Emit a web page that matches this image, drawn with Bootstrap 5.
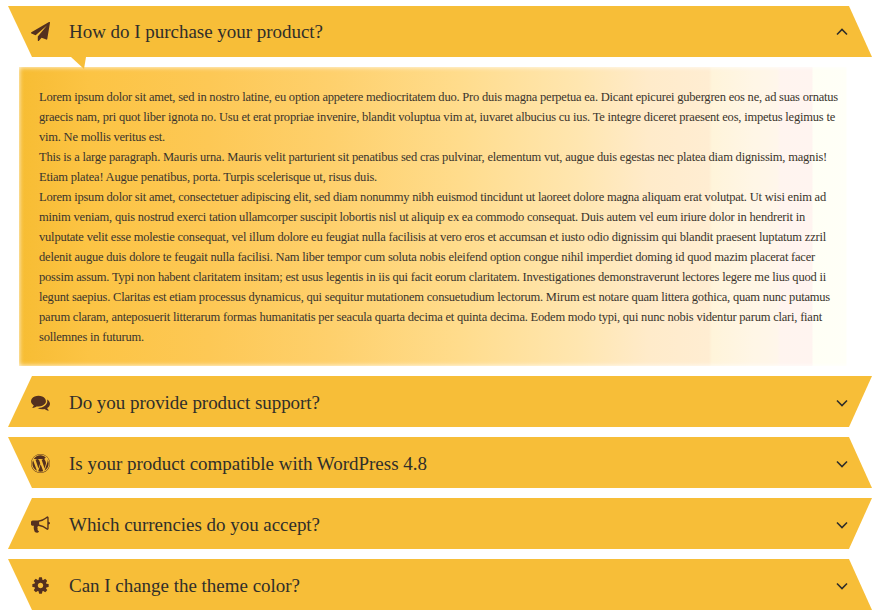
<!DOCTYPE html>
<html lang="en">
<head>
<meta charset="utf-8">
<meta name="viewport" content="width=device-width, initial-scale=1">
<title>FAQ</title>
<link href="https://cdn.jsdelivr.net/npm/bootstrap@5.3.0/dist/css/bootstrap.min.css" rel="stylesheet">
<style>
body{font-family:"Liberation Serif","Times New Roman",serif;background:#fff;overflow:hidden}
.faq{padding:6px 8px 5px;gap:10px}
.faq-head{height:51px;padding:0 24px 0 23px;background:#f7be38;color:#302e2a;font-size:19px;line-height:1;text-align:left;clip-path:polygon(0 0,841px 0,100% 100%,24px 100%)}
.faq-item:nth-child(even) .faq-head{clip-path:polygon(24px 0,100% 0,841px 100%,0 100%)}
.faq-item + .faq-item .faq-head{padding-top:1px}
.faq-icon{width:19px;height:19px;fill:#54301f;margin-right:19px;flex:none}
.faq-caret{width:12px;height:8px;fill:none;stroke:#302e2a;stroke-width:1.6;margin-top:1px}
.faq-item{position:relative}
.faq-tail{position:absolute;left:63px;top:51px;width:15px;height:12px;fill:#f7be38;z-index:2}
.faq-panel{margin:10px 12px 0 11px;height:299px;padding:20px 0 0 20px;color:#3a342c;font-size:12.5px;line-height:20px;
background:linear-gradient(90deg,#f7bd33 0,#f9bf3a 28px,#fcc444 70px,#fdc855 190px,#fed06c 310px,#ffdc8c 440px,#ffe6b0 560px,#ffebca 630px,#ffedd2 690px,#fff4da 693px,#fff6e6 735px,#fff6ea 758px,#fff4ef 761px,#fff4f0 793px,#fffff5 794px,#fffff7 827px,#fff 828px);box-shadow:inset 0 0 5px #fff}
.faq-panel p{margin:0;white-space:nowrap}
.fit{display:block;width:max-content;white-space:nowrap}
</style>
<script src="https://cdn.jsdelivr.net/npm/bootstrap@5.3.0/dist/js/bootstrap.bundle.min.js"></script>
</head>
<body>
<main class="faq d-flex flex-column" id="faq">
<section class="faq-item">
<button class="faq-head w-100 border-0 d-flex align-items-center" type="button" data-bs-toggle="collapse" data-bs-target="#answer">
<svg class="faq-icon" viewBox="0 0 1792 1792"><path d="M1764 11q33 24 27 64l-256 1536q-5 29-32 45-14 8-31 8-11 0-24-5l-453-185-242 295q-18 23-49 23-13 0-22-4-19-7-30.500-23.500t-11.500-36.500v-349l864-1059-1069 925-395-162q-37-14-40-55-2-40 32-59l1664-960q15-9 32-9 20 0 36 11z"/></svg>
<span class="fit" data-w="254">How do I purchase your product?</span>
<svg class="faq-caret ms-auto" viewBox="0 0 12 8"><path d="M1 6.500L6 1.500L11 6.500"/></svg>
</button>
<svg class="faq-tail" viewBox="0 0 15 12"><path d="M0 0H15L13 12Z"/></svg>
<div class="collapse show" id="answer"><div class="faq-panel">
<p><span class="fit" data-w="799">Lorem ipsum dolor sit amet, sed in nostro latine, eu option appetere mediocritatem duo. Pro duis magna perpetua ea. Dicant epicurei gubergren eos ne, ad suas ornatus</span>
<span class="fit" data-w="796">graecis nam, pri quot liber ignota no. Usu et erat propriae invenire, blandit voluptua vim at, iuvaret albucius cu ius. Te integre diceret praesent eos, impetus legimus te</span>
<span class="fit" data-w="126">vim. Ne mollis veritus est.</span></p>
<p><span class="fit" data-w="788">This is a large paragraph. Mauris urna. Mauris velit parturient sit penatibus sed cras pulvinar, elementum vut, augue duis egestas nec platea diam dignissim, magnis!</span>
<span class="fit" data-w="338">Etiam platea! Augue penatibus, porta. Turpis scelerisque ut, risus duis.</span></p>
<p><span class="fit" data-w="787">Lorem ipsum dolor sit amet, consectetuer adipiscing elit, sed diam nonummy nibh euismod tincidunt ut laoreet dolore magna aliquam erat volutpat. Ut wisi enim ad</span>
<span class="fit" data-w="766">minim veniam, quis nostrud exerci tation ullamcorper suscipit lobortis nisl ut aliquip ex ea commodo consequat. Duis autem vel eum iriure dolor in hendrerit in</span>
<span class="fit" data-w="787">vulputate velit esse molestie consequat, vel illum dolore eu feugiat nulla facilisis at vero eros et accumsan et iusto odio dignissim qui blandit praesent luptatum zzril</span>
<span class="fit" data-w="776">delenit augue duis dolore te feugait nulla facilisi. Nam liber tempor cum soluta nobis eleifend option congue nihil imperdiet doming id quod mazim placerat facer</span>
<span class="fit" data-w="787">possim assum. Typi non habent claritatem insitam; est usus legentis in iis qui facit eorum claritatem. Investigationes demonstraverunt lectores legere me lius quod ii</span>
<span class="fit" data-w="791">legunt saepius. Claritas est etiam processus dynamicus, qui sequitur mutationem consuetudium lectorum. Mirum est notare quam littera gothica, quam nunc putamus</span>
<span class="fit" data-w="783">parum claram, anteposuerit litterarum formas humanitatis per seacula quarta decima et quinta decima. Eodem modo typi, qui nunc nobis videntur parum clari, fiant</span>
<span class="fit" data-w="105">sollemnes in futurum.</span></p>
</div></div>
</section>
<section class="faq-item">
<button class="faq-head w-100 border-0 d-flex align-items-center" type="button">
<svg class="faq-icon" viewBox="0 0 1792 1792"><path d="M1408 768q0 139-94 257t-256.500 186.500-353.500 68.500q-86 0-176-16-124 88-278 128-36 9-86 16h-3q-11 0-20.500-8t-11.500-21q-1-3-1-6.500t.5-6.500 2-6l2.500-5 3.500-5.500 4-5 4.500-5 4-4.500q5-6 23-25t26-29.500 22.500-29 25-38.500 20.500-44q-124-72-195-177t-71-224q0-139 94-257t256.500-186.500 353.500-68.500 353.500 68.500 256.500 186.500 94 257zm384 256q0 120-71 224.500t-195 176.500q10 24 20.500 44t25 38.500 22.500 29 26 29.500 23 25q1 1 4 4.500t4.500 5 4 5 3.500 5.500l2.500 5 2 6 .5 6.500-1 6.500q-3 14-13 22t-22 7q-50-7-86-16-154-40-278-128-90 16-176 16-271 0-472-132 58 4 88 4 161 0 309-45t264-129q125-92 192-212t67-254q0-77-23-152 129 71 204 178t75 230z"/></svg>
<span class="fit" data-w="251">Do you provide product support?</span>
<svg class="faq-caret ms-auto" viewBox="0 0 12 8"><path d="M1 1.500L6 6.500L11 1.500"/></svg>
</button>
</section>
<section class="faq-item">
<button class="faq-head w-100 border-0 d-flex align-items-center" type="button">
<svg class="faq-icon" viewBox="0 0 1792 1792"><path d="M127 896q0-163 67-313l367 1005q-196-95-315-281t-119-411zm1288-39q0 19-2.500 38.500t-10 49.500-11.500 44-17.500 59-17.500 58l-76 256-278-826q46-3 88-8 19-2 26-18.500t-2.500-31-28.500-13.500l-205 10q-75-1-202-10-12-1-20.500 5t-11.500 15-1.500 18.500 9 16.500 19.500 8l80 8 120 328-168 504-280-832q46-3 88-8 19-2 26-18.500t-2.500-31-28.500-13.500l-205 10q-7 0-23-.5t-26-.5q105-160 274.500-253.500t367.500-93.500q147 0 280.500 53t238.500 149h-10q-55 0-92 40.500t-37 95.500q0 12 2 24t4 21.500 8 23 9 21 12 22.500 12.500 21 14.500 24 14 23q63 107 63 212zm-506 106l237 647q1 6 5 11-126 44-255 44-112 0-217-32zm661-436q95 174 95 369 0 209-104 385.500t-279 278.500l235-678q59-169 59-276 0-42-6-79zm-674-527q182 0 348 71t286 191 191 286 71 348-71 348-191 286-286 191-348 71-348-71-286-191-191-286-71-348 71-348 191-286 286-191 348-71zm0 1751q173 0 331.500-68t273-182.500 182.500-273 68-331.500-68-331.500-182.500-273-273-182.500-331.500-68-331.500 68-273 182.500-182.500 273-68 331.500 68 331.500 182.500 273 273 182.500 331.500 68z"/></svg>
<span class="fit" data-w="358">Is your product compatible with WordPress 4.8</span>
<svg class="faq-caret ms-auto" viewBox="0 0 12 8"><path d="M1 1.500L6 6.500L11 1.500"/></svg>
</button>
</section>
<section class="faq-item">
<button class="faq-head w-100 border-0 d-flex align-items-center" type="button">
<svg class="faq-icon" viewBox="0 0 1792 1792"><path d="M1664 640q53 0 90.500 37.500t37.500 90.500-37.500 90.500-90.500 37.500v384q0 52-38 90t-90 38q-417-347-812-380-58 19-91 66t-31 100.500 40 92.500q-20 33-23 65.500t6 58 33.500 55 48 50 61.500 50.500q-29 58-111.500 83t-168.500 11.500-132-55.500q-7-23-29.500-87.500t-32-94.500-23-89-15-101 3.500-98.500 22-110.500h-122q-66 0-113-47t-47-113v-192q0-66 47-113t113-47h480q435 0 896-384 52 0 90 38t38 90v384zm-128 604v-954q-394 302-768 343v270q377 42 768 341z"/></svg>
<span class="fit" data-w="251">Which currencies do you accept?</span>
<svg class="faq-caret ms-auto" viewBox="0 0 12 8"><path d="M1 1.500L6 6.500L11 1.500"/></svg>
</button>
</section>
<section class="faq-item">
<button class="faq-head w-100 border-0 d-flex align-items-center" type="button">
<svg class="faq-icon" viewBox="0 0 1792 1792"><path d="M1152 896q0-106-75-181t-181-75-181 75-75 181 75 181 181 75 181-75 75-181zm512-109v222q0 12-8 23t-20 13l-185 28q-19 54-39 91 35 50 107 138 10 12 10 25t-9 23q-27 37-99 108t-94 71q-12 0-26-9l-138-108q-44 23-91 38-16 136-29 186-7 28-36 28h-222q-14 0-24.500-8.500t-11.500-21.500l-28-184q-49-16-90-37l-141 107q-10 9-25 9-14 0-25-11-126-114-165-168-7-10-7-23 0-12 8-23 15-21 51-66.500t54-70.500q-27-50-41-99l-183-27q-13-2-21-12.500t-8-23.500v-222q0-12 8-23t19-13l186-28q14-46 39-92-40-57-107-138-10-12-10-24 0-10 9-23 26-36 98.500-107.500t94.500-71.500q13 0 26 10l138 107q44-23 91-38 16-136 29-186 7-28 36-28h222q14 0 24.500 8.500t11.500 21.500l28 184q49 16 90 37l142-107q9-9 24-9 13 0 25 10 129 119 165 170 7 8 7 22 0 12-8 23-15 21-51 66.500t-54 70.500q26 50 41 98l183 28q13 2 21 12.500t8 23.500z"/></svg>
<span class="fit" data-w="231">Can I change the theme color?</span>
<svg class="faq-caret ms-auto" viewBox="0 0 12 8"><path d="M1 1.500L6 6.500L11 1.500"/></svg>
</button>
</section>
</main>
<script>
// Track each line so that it fills its own measure.
document.querySelectorAll('.fit').forEach(function (el) {
  var gap = (Number(el.dataset.w) - el.getBoundingClientRect().width) / el.textContent.length;
  el.style.letterSpacing = gap.toFixed(4) + 'px';
});
</script>
</body>
</html>
